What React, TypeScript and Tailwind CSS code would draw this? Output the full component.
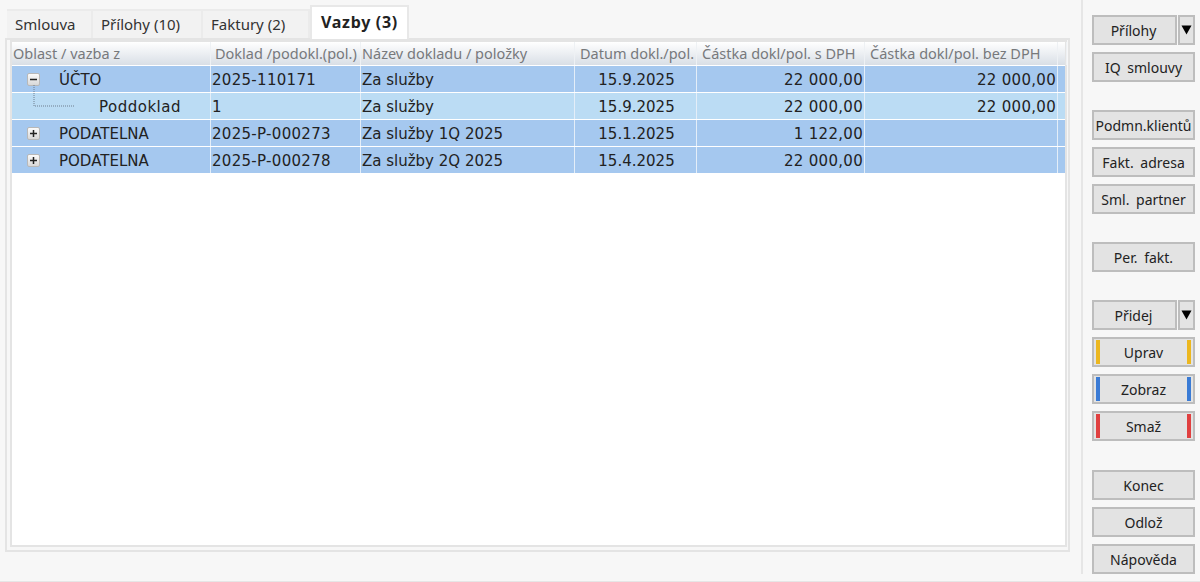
const columns = "grid grid-cols-[199px_150px_214px_122px_168px_193px_9px]";

const rows = [
    { area: "ÚČTO", doc: "2025-110171", name: "Za služby", date: "15.9.2025", gross: "22 000,00", net: "22 000,00", icon: "minus" },
    { area: "Poddoklad", doc: "1", name: "Za služby", date: "15.9.2025", gross: "22 000,00", net: "22 000,00", icon: "child" },
    { area: "PODATELNA", doc: "2025-P-000273", name: "Za služby 1Q 2025", date: "15.1.2025", gross: "1 122,00", net: "", icon: "plus" },
    { area: "PODATELNA", doc: "2025-P-000278", name: "Za služby 2Q 2025", date: "15.4.2025", gross: "22 000,00", net: "", icon: "plus" },
];

const headers = [
    { label: "Oblast / vazba z", cls: "pl-[1px]" },
    { label: "Doklad /podokl.(pol.)", cls: "pl-[4px]" },
    { label: "Název dokladu / položky", cls: "pl-[1px]" },
    { label: "Datum dokl./pol.", cls: "pl-[5px]" },
    { label: "Částka dokl/pol. s DPH", cls: "pl-[5px]" },
    { label: "Částka dokl/pol. bez DPH", cls: "pl-[5px]" },
    { label: "", cls: "" },
];

const Toggle = ({ open }: { open: boolean }) => (
    <span className="flex h-[13px] w-[13px] items-center justify-center rounded-[2px] border border-[#b8b8b8] bg-gradient-to-b from-[#fbfbfb] to-[#d8d8d8]">
        <svg width="9" height="9" viewBox="0 0 9 9">
            <rect x="1" y="3.75" width="7" height="1.5" fill="#222" />
            {!open && <rect x="3.75" y="1" width="1.5" height="7" fill="#222" />}
        </svg>
    </span>
);

const Button = ({ label, accent }: { label: string; accent?: string }) => (
    <div className="relative flex h-[30px] w-[103px] items-center justify-center border-2 border-[#bdbdbd] bg-[#e3e3e3] pt-[2px] text-[#222] [word-spacing:3px]">
        {accent && <span className={`absolute top-[1px] bottom-[1px] left-[2px] w-[4px] ${accent}`} />}
        {label}
        {accent && <span className={`absolute top-[1px] bottom-[1px] right-[2px] w-[4px] ${accent}`} />}
    </div>
);

const SplitButton = ({ label }: { label: string }) => (
    <div className="flex w-[103px] gap-[1px]">
        <div className="flex h-[30px] w-[85px] items-center justify-center border-2 border-[#bdbdbd] bg-[#e3e3e3] pt-[2px] pr-[2px] text-[#222]">
            {label}
        </div>
        <div className="flex h-[30px] w-[17px] items-center justify-center border-2 border-[#bdbdbd] bg-[#e3e3e3]">
            <svg width="11" height="10" viewBox="0 0 11 10">
                <path d="M0.5 0.5H10.5L5.5 9.5Z" fill="#000" />
            </svg>
        </div>
    </div>
);

const Tab = ({ label, width }: { label: string; width: string }) => (
    <div className={`flex h-[29px] items-center border-t-2 border-r-2 border-[#ebebeb] bg-[#f2f2f2] pb-[1px] pl-[8px] text-[#333] ${width}`}>
        {label}
    </div>
);

export default function App() {
    return (
        <div
            className="flex h-[582px] w-[1200px] overflow-hidden border-b border-[#e6e6e6] bg-[#f7f7f7] text-[14px] leading-none"
            style={{ fontFamily: '"Noto Sans", "DejaVu Sans", sans-serif' }}
        >
            <div className="flex w-[1081px] flex-col pt-[5px] pl-[5px]">
                <div className="relative z-10 flex h-[33px] items-end pl-[2px] text-[15px]">
                    <Tab label="Smlouva" width="w-[86px]" />
                    <Tab label="Přílohy (10)" width="w-[110px]" />
                    <Tab label="Faktury (2)" width="w-[107px]" />
                    <div className="-mb-[1px] flex h-[34px] w-[99px] items-center border-x-2 border-t-2 border-[#e8e8e8] bg-white pb-[3px] pl-[9px] text-[16px] font-bold tracking-[0.7px] text-[#222]">
                        Vazby (3)
                    </div>
                </div>
                <div className="h-[514px] w-[1065px] border-2 border-[#e4e4e4] pr-[1px] pb-[3px] pl-[3px]">
                    <div className="h-full border-2 border-[#e4e4e4] bg-white">
                        <div className={`${columns} h-[23px] bg-gradient-to-b from-white to-[#d9dfe6] text-[#77797c]`}>
                            {headers.map((h, i) => (
                                <div
                                    key={i}
                                    className={`flex items-center overflow-hidden whitespace-nowrap border-r border-[#eef1f4] text-[14.5px] ${h.cls}`}
                                >
                                    {h.label}
                                </div>
                            ))}
                        </div>
                        {rows.map((r, i) => (
                            <div
                                key={i}
                                className={`${columns} mt-[1px] h-[26px] text-[15px] text-[#222] ${r.icon === "child" ? "bg-[#bbdcf4]" : "bg-[#a5c8ef]"}`}
                                style={{ fontFamily: '"DejaVu Sans", sans-serif' }}
                            >
                                <div className="relative flex items-center border-r border-[#e4eef8] pt-[2px]">
                                    {r.icon === "child" ? (
                                        <>
                                            <svg
                                                className="absolute top-[-8px] left-[21px]"
                                                width="44"
                                                height="24"
                                                viewBox="0 0 44 24"
                                            >
                                                <path d="M1 0V21H42" fill="none" stroke="#6f7f8f" strokeDasharray="1 1" />
                                            </svg>
                                            <span className="pl-[87px] tracking-[0.5px]">{r.area}</span>
                                        </>
                                    ) : (
                                        <>
                                            <span className="-mt-[2px] ml-[15px]">
                                                <Toggle open={r.icon === "minus"} />
                                            </span>
                                            <span className="ml-[19px]">{r.area}</span>
                                        </>
                                    )}
                                </div>
                                <div className="flex items-center border-r border-[#e4eef8] pt-[2px] pl-[1px] tracking-[0.3px]">{r.doc}</div>
                                <div className="flex items-center border-r border-[#e4eef8] pt-[2px] pl-[1px]">{r.name}</div>
                                <div className="flex items-center justify-center border-r border-[#e4eef8] pt-[2px] pl-[2px]">{r.date}</div>
                                <div className="flex items-center justify-end border-r border-[#e4eef8] pt-[2px] pr-[1px] tracking-[0.3px]">{r.gross}</div>
                                <div className="flex items-center justify-end border-r border-[#e4eef8] pt-[2px] pr-[1px] tracking-[0.3px]">{r.net}</div>
                                <div />
                            </div>
                        ))}
                    </div>
                </div>
            </div>
            <div className="flex h-[574px] w-[119px] flex-col items-start border-l-2 border-[#e6e6e6] pt-[15px] pl-[9px]">
                <div className="flex flex-col gap-[7px]">
                    <SplitButton label="Přílohy" />
                    <Button label="IQ smlouvy" />
                </div>
                <div className="mt-[28px] flex flex-col gap-[7px]">
                    <Button label="Podmn.klientů" />
                    <Button label="Fakt. adresa" />
                    <Button label="Sml. partner" />
                </div>
                <div className="mt-[28px]">
                    <Button label="Per. fakt." />
                </div>
                <div className="mt-[28px] flex flex-col gap-[7px]">
                    <SplitButton label="Přidej" />
                    <Button label="Uprav" accent="bg-[#ecb71f]" />
                    <Button label="Zobraz" accent="bg-[#3a7bd5]" />
                    <Button label="Smaž" accent="bg-[#e04040]" />
                </div>
                <div className="mt-[29px] flex flex-col gap-[7px]">
                    <Button label="Konec" />
                    <Button label="Odlož" />
                    <Button label="Nápověda" />
                </div>
            </div>
        </div>
    );
}
